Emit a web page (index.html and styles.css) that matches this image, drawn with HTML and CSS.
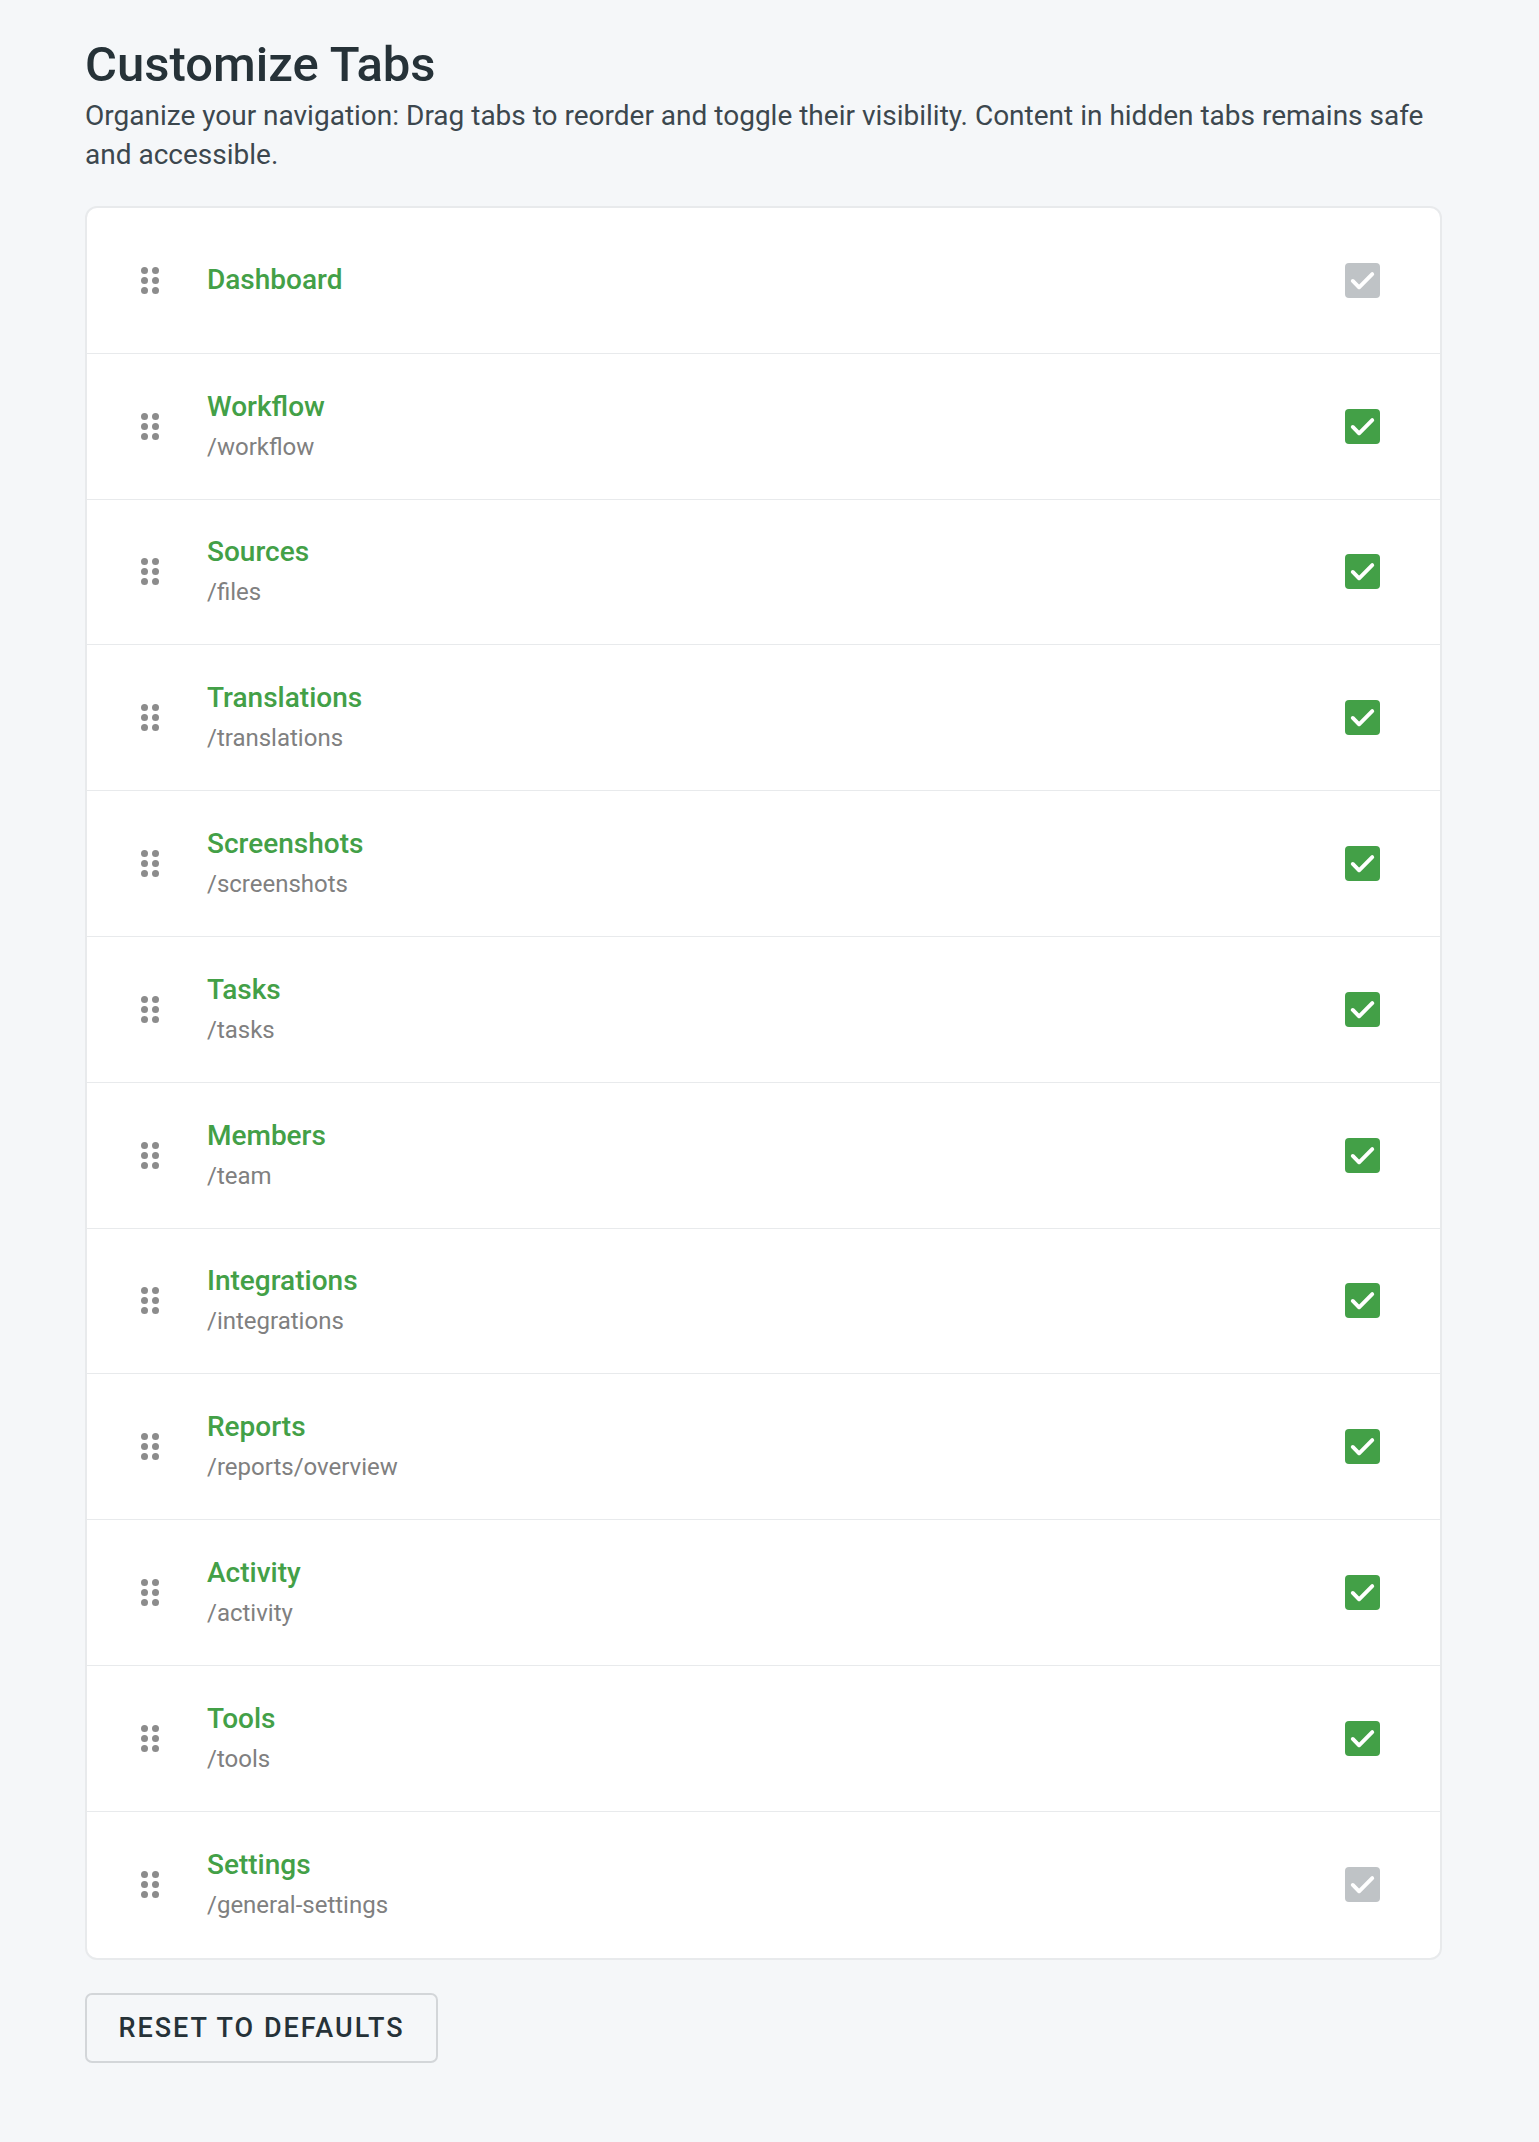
FILE: index.html
```html
<!DOCTYPE html>
<html lang="en">
<head>
<meta charset="utf-8">
<title>Customize Tabs</title>
<link rel="stylesheet" href="styles.css">
</head>
<body>
<main class="page">
  <h1 class="title">Customize Tabs</h1>
  <p class="desc">Organize your navigation: Drag tabs to reorder and toggle their visibility. Content in hidden tabs remains safe and accessible.</p>

  <ul class="tab-list">
    <li class="tab-row">
      <span class="handle"><i></i><i></i><i></i><i></i><i></i><i></i></span>
      <div class="tab-info"><div class="tab-name">Dashboard</div></div>
      <span class="check disabled"><svg viewBox="0 0 36 36"><path d="M8 18.5 L14.5 25 L28 11.5"/></svg></span>
    </li>
    <li class="tab-row">
      <span class="handle"><i></i><i></i><i></i><i></i><i></i><i></i></span>
      <div class="tab-info"><div class="tab-name">Workflow</div><div class="tab-path">/workflow</div></div>
      <span class="check"><svg viewBox="0 0 36 36"><path d="M8 18.5 L14.5 25 L28 11.5"/></svg></span>
    </li>
    <li class="tab-row">
      <span class="handle"><i></i><i></i><i></i><i></i><i></i><i></i></span>
      <div class="tab-info"><div class="tab-name">Sources</div><div class="tab-path">/files</div></div>
      <span class="check"><svg viewBox="0 0 36 36"><path d="M8 18.5 L14.5 25 L28 11.5"/></svg></span>
    </li>
    <li class="tab-row">
      <span class="handle"><i></i><i></i><i></i><i></i><i></i><i></i></span>
      <div class="tab-info"><div class="tab-name">Translations</div><div class="tab-path">/translations</div></div>
      <span class="check"><svg viewBox="0 0 36 36"><path d="M8 18.5 L14.5 25 L28 11.5"/></svg></span>
    </li>
    <li class="tab-row">
      <span class="handle"><i></i><i></i><i></i><i></i><i></i><i></i></span>
      <div class="tab-info"><div class="tab-name">Screenshots</div><div class="tab-path">/screenshots</div></div>
      <span class="check"><svg viewBox="0 0 36 36"><path d="M8 18.5 L14.5 25 L28 11.5"/></svg></span>
    </li>
    <li class="tab-row">
      <span class="handle"><i></i><i></i><i></i><i></i><i></i><i></i></span>
      <div class="tab-info"><div class="tab-name">Tasks</div><div class="tab-path">/tasks</div></div>
      <span class="check"><svg viewBox="0 0 36 36"><path d="M8 18.5 L14.5 25 L28 11.5"/></svg></span>
    </li>
    <li class="tab-row">
      <span class="handle"><i></i><i></i><i></i><i></i><i></i><i></i></span>
      <div class="tab-info"><div class="tab-name">Members</div><div class="tab-path">/team</div></div>
      <span class="check"><svg viewBox="0 0 36 36"><path d="M8 18.5 L14.5 25 L28 11.5"/></svg></span>
    </li>
    <li class="tab-row">
      <span class="handle"><i></i><i></i><i></i><i></i><i></i><i></i></span>
      <div class="tab-info"><div class="tab-name">Integrations</div><div class="tab-path">/integrations</div></div>
      <span class="check"><svg viewBox="0 0 36 36"><path d="M8 18.5 L14.5 25 L28 11.5"/></svg></span>
    </li>
    <li class="tab-row">
      <span class="handle"><i></i><i></i><i></i><i></i><i></i><i></i></span>
      <div class="tab-info"><div class="tab-name">Reports</div><div class="tab-path">/reports/overview</div></div>
      <span class="check"><svg viewBox="0 0 36 36"><path d="M8 18.5 L14.5 25 L28 11.5"/></svg></span>
    </li>
    <li class="tab-row">
      <span class="handle"><i></i><i></i><i></i><i></i><i></i><i></i></span>
      <div class="tab-info"><div class="tab-name">Activity</div><div class="tab-path">/activity</div></div>
      <span class="check"><svg viewBox="0 0 36 36"><path d="M8 18.5 L14.5 25 L28 11.5"/></svg></span>
    </li>
    <li class="tab-row">
      <span class="handle"><i></i><i></i><i></i><i></i><i></i><i></i></span>
      <div class="tab-info"><div class="tab-name">Tools</div><div class="tab-path">/tools</div></div>
      <span class="check"><svg viewBox="0 0 36 36"><path d="M8 18.5 L14.5 25 L28 11.5"/></svg></span>
    </li>
    <li class="tab-row">
      <span class="handle"><i></i><i></i><i></i><i></i><i></i><i></i></span>
      <div class="tab-info"><div class="tab-name">Settings</div><div class="tab-path">/general-settings</div></div>
      <span class="check disabled"><svg viewBox="0 0 36 36"><path d="M8 18.5 L14.5 25 L28 11.5"/></svg></span>
    </li>
  </ul>

  <button class="reset-btn" type="button">RESET TO DEFAULTS</button>
</main>
</body>
</html>
```

FILE: styles.css
```css
* { box-sizing: border-box; }

html, body {
  margin: 0;
  padding: 0;
  background: #f5f7f9;
}

body {
  font-family: Roboto, "Liberation Sans", Arial, sans-serif;
  color: #263238;
}

.page {
  width: 1357px;
  margin-left: 85px;
  padding-top: 37px;
  padding-bottom: 60px;
}

.title {
  margin: 0;
  font-size: 49px;
  line-height: 56px;
  font-weight: 500;
  color: #263238;
}

.desc {
  margin: 4px 0 0;
  font-size: 28px;
  line-height: 38.5px;
  color: #3c474e;
}

.tab-list {
  list-style: none;
  margin: 32px 0 0;
  padding: 0;
  background: #ffffff;
  border: 2px solid #e8eaec;
  border-radius: 12px;
  overflow: hidden;
}

.tab-row {
  display: flex;
  align-items: center;
  height: 145.8px;
  padding: 0 60px 0 54px;
  border-bottom: 1.5px solid #e8eaec;
}

.tab-row:last-child { border-bottom: none; }

.handle {
  display: grid;
  grid-template-columns: 7px 7px;
  grid-auto-rows: 7px;
  column-gap: 4px;
  row-gap: 3px;
  width: 18px;
  flex: none;
}

.handle i {
  display: block;
  width: 7px;
  height: 7px;
  border-radius: 50%;
  background: #8c8c8c;
}

.tab-info {
  flex: 1;
  margin-left: 48px;
}

.tab-name {
  font-size: 28px;
  line-height: 38px;
  font-weight: 500;
  color: #43a047;
}

.tab-path {
  margin-top: 3px;
  font-size: 24px;
  line-height: 36px;
  color: #808080;
}

.check {
  flex: none;
  width: 35px;
  height: 35px;
  border-radius: 4px;
  background: #43a047;
  display: flex;
  align-items: center;
  justify-content: center;
}

.check.disabled { background: #bfc3c6; }

.check svg {
  width: 35px;
  height: 35px;
  fill: none;
  stroke: #ffffff;
  stroke-width: 4;
  stroke-linecap: round;
  stroke-linejoin: round;
}

.reset-btn {
  margin-top: 33px;
  width: 353px;
  height: 70px;
  background: #f5f7f9;
  border: 2px solid #d3d6d9;
  border-radius: 7px;
  font-family: Roboto, "Liberation Sans", Arial, sans-serif;
  font-size: 27px;
  font-weight: 500;
  letter-spacing: 2px;
  color: #263238;
  padding: 0;
}
```
